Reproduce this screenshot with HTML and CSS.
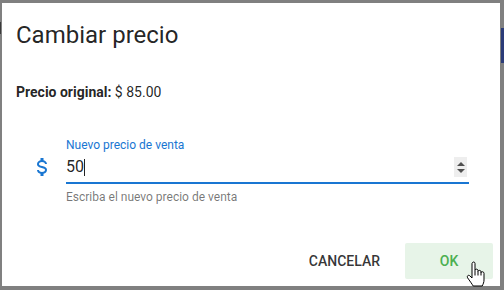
FILE: index.html
```html
<!DOCTYPE html>
<html lang="es">
<head>
<meta charset="utf-8">
<title>Cambiar precio</title>
<link rel="stylesheet" href="styles.css">
</head>
<body>
<div class="dialog">
  <div class="title">Cambiar precio</div>
  <div class="original"><b>Precio original:</b> $ 85.00</div>
  <div class="field-row">
    <svg class="prepend" viewBox="0 0 24 24" width="24" height="24"><path d="M7,15H9C9,16.08 10.37,17 12,17C13.63,17 15,16.08 15,15C15,13.9 13.96,13.5 11.76,12.97C9.64,12.44 7,11.78 7,9C7,7.21 8.47,5.69 10.5,5.18V3H13.5V5.18C15.530,5.69 17,7.21 17,9H15C15,7.92 13.63,7 12,7C10.37,7 9,7.92 9,9C9,10.1 10.04,10.5 12.240,11.03C14.36,11.56 17,12.22 17,15C17,16.79 15.53,18.31 13.5,18.82V21H10.5V18.82C8.47,18.31 7,16.79 7,15Z"/></svg>
    <div class="field">
      <div class="label">Nuevo precio de venta</div>
      <div class="input">
        <span class="value">50</span><span class="caret"></span>
        <span class="spinner"><span class="up"></span><span class="down"></span></span>
      </div>
      <div class="hint">Escriba el nuevo precio de venta</div>
    </div>
  </div>
  <div class="actions">
    <button class="btn cancel">CANCELAR</button>
    <button class="btn ok">OK</button>
  </div>
  <svg class="cursor" viewBox="0 0 20 27" width="20" height="27"><path d="M6.5,1.5 C7.3,0.6 9,0.9 9,2.5 L9,9 C9.4,7.8 12,7.8 12,9.5 L12,10.2 C12.4,9 15,9 15,10.8 L15,11.5 C15.4,10.4 18,10.4 18,12.3 L18,19 C18,21.2 17.2,23 16.2,25 L7.2,25 C6,23 3.5,19.5 1.6,16.8 C0.6,15.2 2.3,13.5 3.7,14.7 L6,17 L6,2.6 C6,2.2 6.2,1.8 6.5,1.5 Z" fill="#fff" stroke="#000" stroke-width="1"/><path d="M9,9 V14.5 M12,10 V14.5 M15,11 V14.5" stroke="#000" stroke-width="1" fill="none"/></svg>
</div>
</body>
</html>
```
FILE: styles.css
```css
html, body {
  margin: 0;
  padding: 0;
}
body {
  width: 504px;
  height: 290px;
  overflow: hidden;
  background:
    linear-gradient(#2b3b78, #2b3b78) no-repeat right 0 top 28px / 3px 35px,
    linear-gradient(#3a3a3a, #3a3a3a) no-repeat left 0 top 22px / 1px 12px,
    #808080;
  font-family: Roboto, "Liberation Sans", sans-serif;
  padding: 3px 4px 4px 2px;
  box-sizing: border-box;
}
.dialog {
  position: relative;
  width: 498px;
  height: 283px;
  background: #fff;
  display: flex;
  flex-direction: column;
  box-sizing: border-box;
  padding: 16px 7px 7px 14px;
  color: rgba(0, 0, 0, 0.87);
}
.title {
  font-size: 24px;
  line-height: 32px;
  font-weight: 400;
  letter-spacing: 0;
}
.original {
  margin-top: 31px;
  font-size: 14px;
  line-height: 20px;
}
.original b {
  font-weight: 700;
}
.field-row {
  margin-top: 35px;
  margin-left: 14px;
  display: flex;
  align-items: flex-start;
}
.prepend {
  fill: #1976d2;
  margin-top: 18px;
  flex: none;
}
.field {
  margin-left: 12px;
  width: 403px;
}
.label {
  font-size: 12px;
  line-height: 16px;
  color: #1976d2;
}
.input {
  margin-top: 4px;
  display: flex;
  align-items: center;
  height: 20px;
  padding-bottom: 5px;
  border-bottom: 2px solid #1976d2;
  font-size: 16px;
  line-height: 20px;
}
.value {
  color: rgba(0, 0, 0, 0.87);
}
.caret {
  width: 1px;
  height: 17px;
  background: #222;
  margin-left: 0.5px;
}
.spinner {
  margin-left: auto;
  margin-right: 2px;
  width: 13px;
  height: 20px;
  background: #eeeeee;
  display: flex;
  flex-direction: column;
  align-items: center;
  justify-content: center;
  gap: 3px;
}
.up {
  width: 0;
  height: 0;
  border-left: 4px solid transparent;
  border-right: 4px solid transparent;
  border-bottom: 4px solid #505050;
}
.down {
  width: 0;
  height: 0;
  border-left: 4px solid transparent;
  border-right: 4px solid transparent;
  border-top: 4px solid #505050;
}
.hint {
  margin-top: 5px;
  font-size: 12px;
  line-height: 16px;
  color: rgba(0, 0, 0, 0.54);
}
.actions {
  margin-top: auto;
  display: flex;
  justify-content: flex-end;
  gap: 9px;
}
.btn {
  height: 36px;
  border: 0;
  border-radius: 2px;
  padding: 0 16px;
  min-width: 88px;
  font-family: Roboto, "Liberation Sans", sans-serif;
  font-size: 14px;
  font-weight: 500;
  letter-spacing: 0;
  background: transparent;
  cursor: pointer;
}
.cancel {
  color: rgba(0, 0, 0, 0.8);
}
.ok {
  background: #e7f4e8;
  color: #4caf50;
}
.cursor {
  position: absolute;
  left: 464px;
  top: 258px;
}
```
